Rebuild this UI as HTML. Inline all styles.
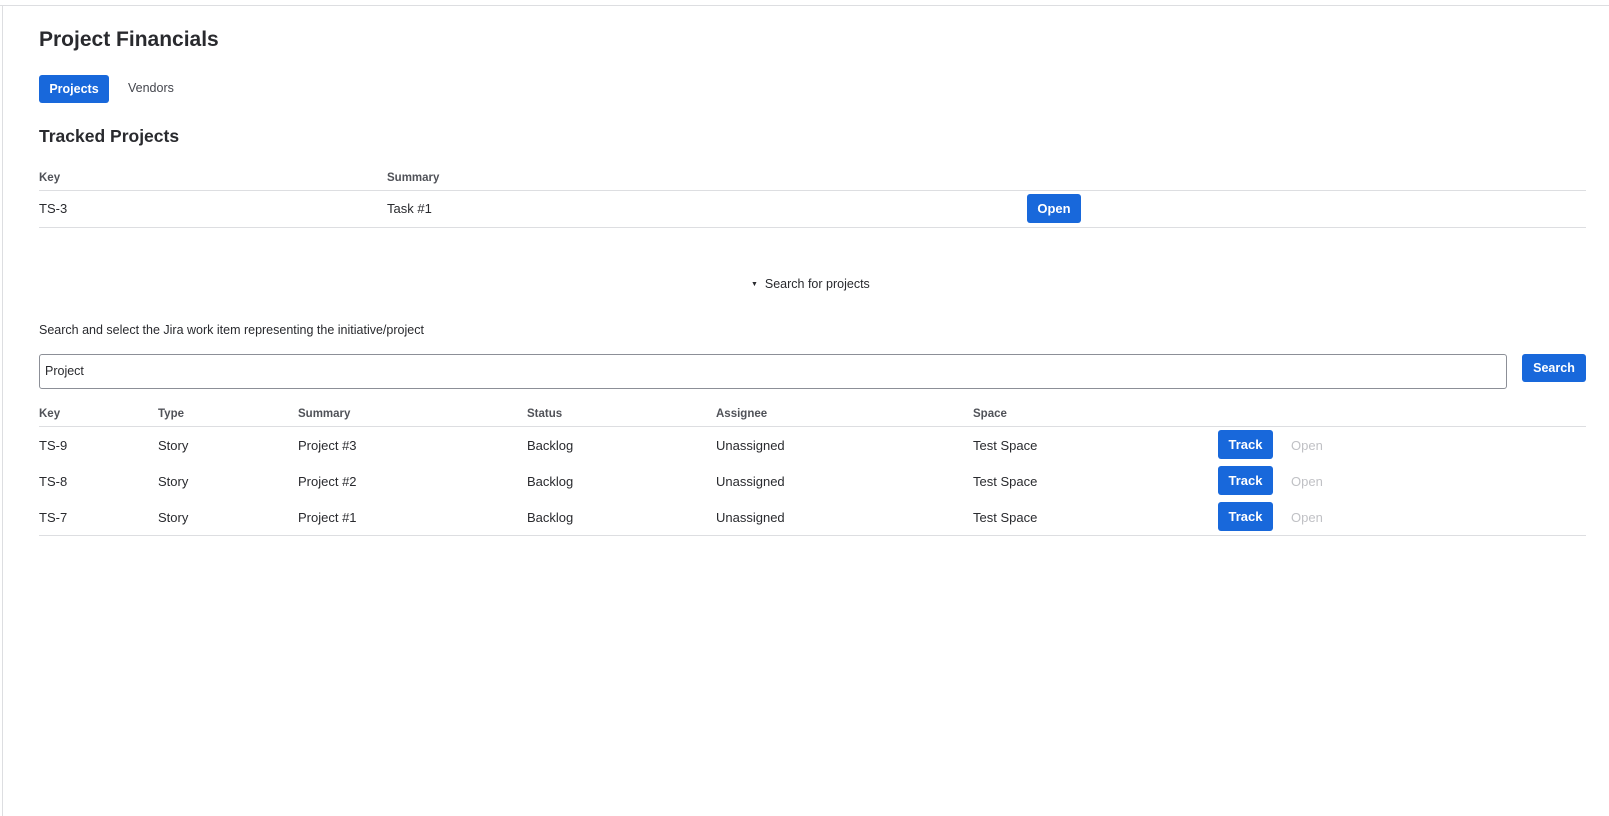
<!DOCTYPE html>
<html><head><meta charset="utf-8"><style>
*{box-sizing:border-box;margin:0;padding:0}
body{width:1609px;height:816px;background:#fff;font-family:"Liberation Sans",Arial,sans-serif;color:#292a2e;position:relative;overflow:hidden;font-size:13px}
.a{position:absolute;white-space:nowrap}
.btn{position:absolute;background:#1868db;color:#fff;font-weight:bold;border-radius:3px;font-size:13px;display:flex;align-items:center;justify-content:center}
.line{position:absolute;left:39px;width:1547px;height:1px;background:#dddee1}
.h{font-weight:bold;font-size:11.5px;color:#505258}
.m{color:#c0c1c5}
</style></head><body>
<div style="position:absolute;left:0;top:5px;width:1609px;height:1px;background:#dddee1"></div>
<div style="position:absolute;left:2px;top:5px;width:1px;height:811px;background:#dddee1"></div>
<div class="a" style="left:39px;top:28px;font-size:21px;font-weight:bold">Project Financials</div>
<div class="btn" style="left:39px;top:75px;width:70px;height:28px;font-size:12.5px">Projects</div>
<div class="a" style="left:128px;top:81px;font-size:12.5px;color:#44464d">Vendors</div>
<div class="a" style="left:39px;top:126px;font-size:17.5px;font-weight:bold">Tracked Projects</div>
<div class="a h" style="left:39px;top:172px">Key</div>
<div class="a h" style="left:387px;top:172px">Summary</div>
<div class="line" style="top:190px"></div>
<div class="a" style="left:39px;top:201px">TS-3</div>
<div class="a" style="left:387px;top:201px">Task #1</div>
<div class="btn" style="left:1027px;top:194px;width:54px;height:29px">Open</div>
<div class="line" style="top:227px"></div>
<div class="a" style="left:751px;top:277px;font-size:12.5px"><span style="font-size:7px;vertical-align:2px">▼</span>&nbsp; Search for projects</div>
<div class="a" style="left:39px;top:323px;font-size:12.5px">Search and select the Jira work item representing the initiative/project</div>
<div style="position:absolute;left:39px;top:354px;width:1468px;height:35px;border:1px solid #8c8f97;border-radius:3px"></div>
<div class="a" style="left:45px;top:364px;font-size:12.5px">Project</div>
<div class="btn" style="left:1522px;top:354px;width:64px;height:28px;font-size:12.5px">Search</div>
<div class="a h" style="left:39px;top:408px">Key</div>
<div class="a h" style="left:158px;top:408px">Type</div>
<div class="a h" style="left:298px;top:408px">Summary</div>
<div class="a h" style="left:527px;top:408px">Status</div>
<div class="a h" style="left:716px;top:408px">Assignee</div>
<div class="a h" style="left:973px;top:408px">Space</div>
<div class="line" style="top:426px"></div>

<div class="a" style="left:39px;top:438px">TS-9</div><div class="a" style="left:158px;top:438px">Story</div><div class="a" style="left:298px;top:438px">Project #3</div><div class="a" style="left:527px;top:438px">Backlog</div><div class="a" style="left:716px;top:438px">Unassigned</div><div class="a" style="left:973px;top:438px">Test Space</div>
<div class="btn" style="left:1218px;top:430px;width:55px;height:29px">Track</div><div class="a m" style="left:1291px;top:438px">Open</div>

<div class="a" style="left:39px;top:474px">TS-8</div><div class="a" style="left:158px;top:474px">Story</div><div class="a" style="left:298px;top:474px">Project #2</div><div class="a" style="left:527px;top:474px">Backlog</div><div class="a" style="left:716px;top:474px">Unassigned</div><div class="a" style="left:973px;top:474px">Test Space</div>
<div class="btn" style="left:1218px;top:466px;width:55px;height:29px">Track</div><div class="a m" style="left:1291px;top:474px">Open</div>

<div class="a" style="left:39px;top:510px">TS-7</div><div class="a" style="left:158px;top:510px">Story</div><div class="a" style="left:298px;top:510px">Project #1</div><div class="a" style="left:527px;top:510px">Backlog</div><div class="a" style="left:716px;top:510px">Unassigned</div><div class="a" style="left:973px;top:510px">Test Space</div>
<div class="btn" style="left:1218px;top:502px;width:55px;height:29px">Track</div><div class="a m" style="left:1291px;top:510px">Open</div>
<div class="line" style="top:535px"></div>
</body></html>
